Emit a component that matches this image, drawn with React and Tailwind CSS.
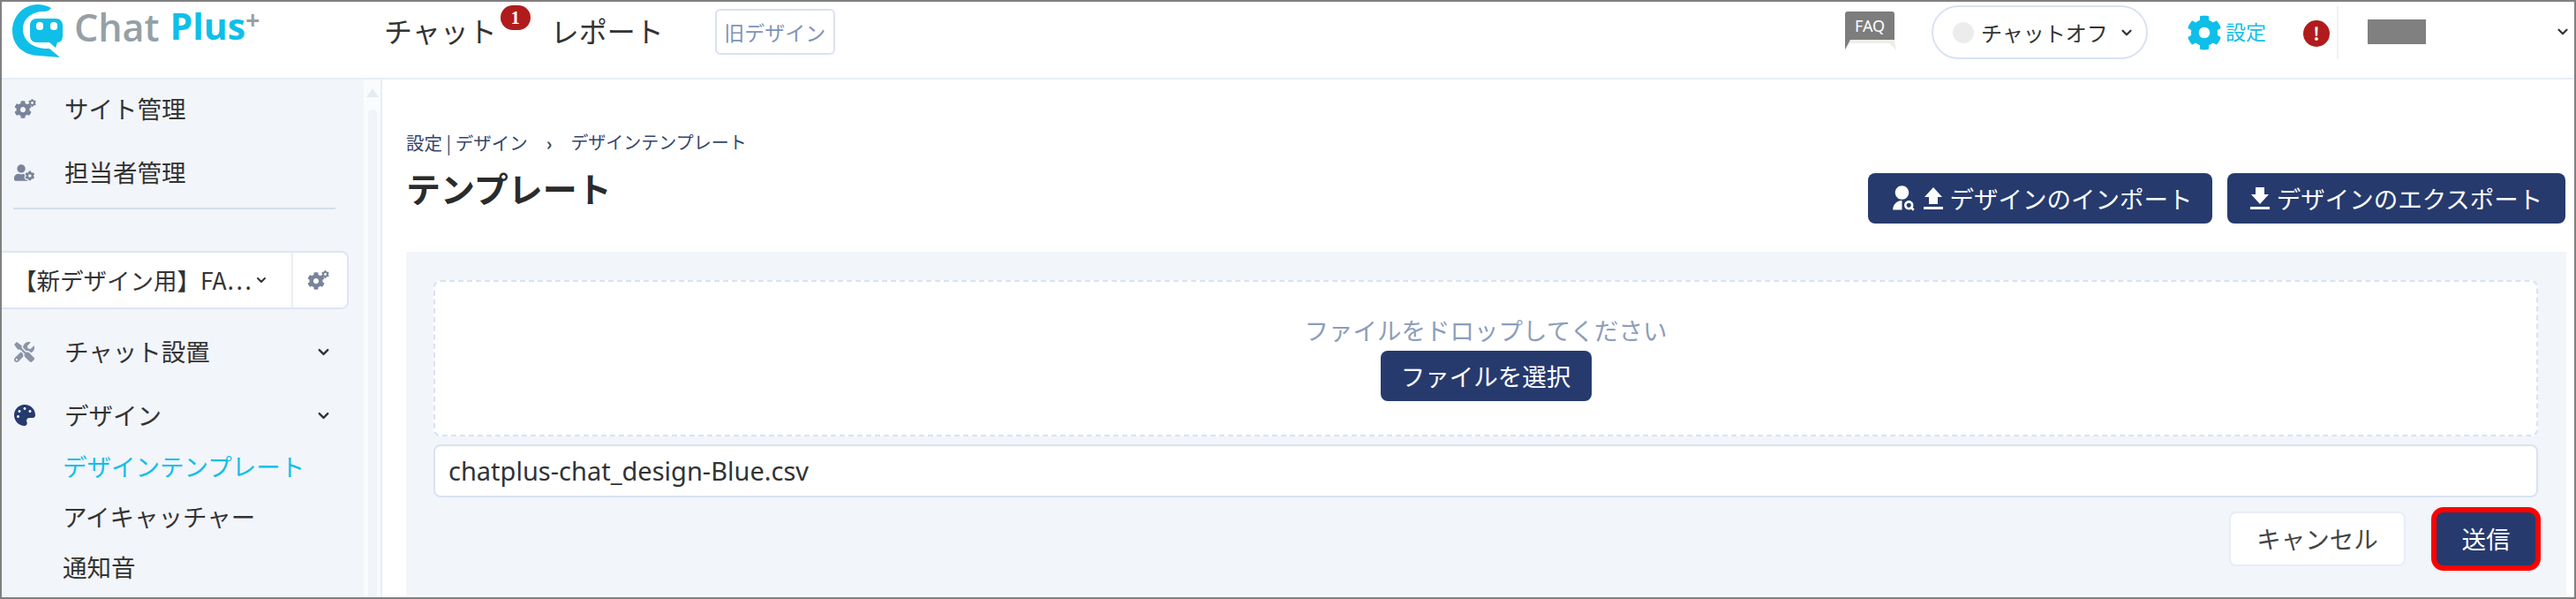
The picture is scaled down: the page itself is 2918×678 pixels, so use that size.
import { FaCog, FaUserCog, FaTools, FaPalette } from 'react-icons/fa';
import { RiUserSearchFill } from 'react-icons/ri';
import { ChevronDown } from 'lucide-react';

const FONT = '"Noto Sans CJK JP", "Noto Sans", sans-serif';

function Logo() {
  return (
    <svg width="58" height="60" viewBox="0 0 58 60" className="shrink-0">
      <path fill="#0fbfe9" d="M44 4C38 1 33 0 29 0 12 0 0 14 0 30c0 17 14 28 30 28l24 2-12-10C28 51 12 44 12 28 12 16 22 8 36 8c4 0 7-2 8-4z" />
      <path fill="#0fbfe9" d="M28 16h21c5 0 8 3 8 8v11c0 5-2 8-6 8l-2 6-7-6H28c-5 0-8-3-8-8V24c0-5 3-8 8-8z" />
      <rect x="27" y="20" width="8" height="9" rx="3.5" fill="#fff" />
      <rect x="43" y="20" width="8" height="9" rx="3.5" fill="#fff" />
    </svg>
  );
}

function FaqIcon() {
  return (
    <div className="relative w-[58px] h-[44px] shrink-0">
      <div className="w-[56px] h-[32px] bg-[#7d7d7d] rounded-t-[3px] flex items-center justify-center text-white text-[18px] font-['Noto_Sans',sans-serif]">FAQ</div>
      <svg width="58" height="12" viewBox="0 0 58 12" className="block">
        <path d="M0 0h56v0L58 12 50 4H6L0 11z" fill="#eeeee8" />
        <path d="M0 0h6L0 11z" fill="#7d7d7d" />
      </svg>
    </div>
  );
}

function GearsIcon({ className }) {
  return (
    <span className={`relative inline-block w-[25px] h-[22px] ${className}`}>
      <FaCog size={20} className="absolute left-0 bottom-0" />
      <FaCog size={9} className="absolute right-0 top-0" />
    </span>
  );
}

function UploadIcon() {
  return (
    <svg width="22" height="26" viewBox="0 0 22 26" className="shrink-0">
      <path fill="#fff" d="M11 0l10 11h-5v8H6v-8H1z" />
      <rect x="0" y="22" width="22" height="3" fill="#fff" />
    </svg>
  );
}

function DownloadIcon() {
  return (
    <svg width="22" height="26" viewBox="0 0 22 26" className="shrink-0">
      <path fill="#fff" d="M6 0h10v8h5L11 19 1 8h5z" />
      <rect x="0" y="22" width="22" height="3" fill="#fff" />
    </svg>
  );
}

function SideItem({ icon, label, hasChevron, textColor = 'text-[#333]' }) {
  return (
    <div className="flex items-center h-[72px]">
      <div className="w-[71px] pl-[14px] shrink-0 flex items-center">{icon}</div>
      <span className={`flex-1 text-[27.5px] leading-none ${textColor}`}>{label}</span>
      {hasChevron && <ChevronDown size={19} strokeWidth={3} className="mr-[36px] text-[#333]" />}
    </div>
  );
}

function SubItem({ label, active }) {
  return (
    <div className={`h-[57px] flex items-center pl-[69px] text-[27.5px] leading-none ${active ? 'text-[#12bfe9]' : 'text-[#333]'}`}>
      {label}
    </div>
  );
}

export default function App() {
  return (
    <div className="w-[2918px] h-[678px] border-2 border-[#808080] bg-white overflow-hidden flex flex-col" style={{ fontFamily: FONT }}>
      {/* Header */}
      <header className="h-[88px] shrink-0 border-b-2 border-[#e8edf6] flex items-start pt-[3px]">
        <div className="flex items-start w-[433px] shrink-0 pl-[12px]">
          <Logo />
          <span className="ml-[12px] mt-[4px] text-[43px] leading-none font-semibold text-[#95a0a6] font-['Open_Sans',sans-serif]">Chat</span>
          <span className="ml-[12px] mt-[4px] text-[41px] leading-none font-bold text-[#0fbfe9] font-['Open_Sans',sans-serif]">Plus</span>
          <span className="text-[28px] leading-none font-bold text-[#95a0a6] font-['Open_Sans',sans-serif] mt-[3px]">+</span>
        </div>
        <nav className="flex items-start h-[64px]">
          <span className="text-[32px] leading-none text-[#333] mt-[13px]">チャット</span>
          <span className="relative ml-[4px] mt-[1px] w-[34px] h-[28px] rounded-full bg-[#b01c1c] text-white text-[20px] leading-[28px] text-center font-['Liberation_Serif',serif] font-bold">1</span>
          <span className="ml-[23px] text-[32px] leading-none text-[#333] mt-[13px]">レポート</span>
          <span className="ml-[58px] mt-[5px] w-[136px] h-[52px] rounded-[6px] border-2 border-[#d9e2f2] text-[#7f93b8] text-[23px] flex items-center justify-center">旧デザイン</span>
        </nav>
        <div className="ml-auto flex items-start h-[64px]">
          <div className="mt-[8px]"><FaqIcon /></div>
          <div className="ml-[40px] mt-[1px] w-[245px] h-[61px] rounded-full border-2 border-[#d9e2f2] flex items-center pl-[22px]">
            <span className="w-[24px] h-[24px] rounded-full bg-[#ececec]" />
            <span className="ml-[8px] text-[24px] leading-none text-[#333]">チャットオフ</span>
            <ChevronDown size={18} strokeWidth={3} className="ml-[12px] text-[#333]" />
          </div>
          <FaCog size={40} className="ml-[44px] mt-[12px] text-[#0fbfe9]" />
          <span className="ml-[4px] mt-[19px] text-[23px] leading-none text-[#12bfe9]">設定</span>
          <span className="ml-[42px] mt-[18px] w-[30px] h-[30px] rounded-full bg-[#b01c1c] text-white text-[20px] leading-[30px] text-center font-bold">!</span>
          <span className="ml-[8px] mt-[2px] w-[2px] h-[60px] bg-[#eef1f6]" />
          <span className="ml-[33px] mt-[17px] w-[66px] h-[28px] bg-[#808080]" />
          <ChevronDown size={18} strokeWidth={3} className="ml-[146px] mr-[4px] mt-[22px] text-[#333]" />
        </div>
      </header>

      <div className="flex flex-1 min-h-0">
        {/* Sidebar */}
        <aside className="w-[410px] shrink-0 bg-[#f2f5fa] flex flex-col">
          <div className="-mt-[3px]">
            <SideItem icon={<GearsIcon className="text-[#79839a]" />} label="サイト管理" />
            <SideItem icon={<FaUserCog size={23} className="text-[#79839a]" />} label="担当者管理" />
          </div>
          <div className="ml-[13px] mr-[32px] h-[2px] bg-[#d6deec] mt-[4px]" />
          <div className="mt-[47px] mr-[17px] h-[66px] bg-white rounded-r-[8px] border-2 border-l-0 border-[#dfe6f3] flex items-center">
            <span className="w-[330px] h-full shrink-0 flex items-center pl-[13px] text-[26.5px] leading-none text-[#333] whitespace-nowrap border-r-2 border-[#e8edf6]">
              【新デザイン用】FA⋯
              <ChevronDown size={16} strokeWidth={3} className="ml-[3px]" />
            </span>
            <GearsIcon className="ml-[16px] text-[#79839a]" />
          </div>
          <div className="mt-[12px]">
            <SideItem icon={<FaTools size={23} className="text-[#8b93a6]" />} label="チャット設置" hasChevron />
            <SideItem icon={<FaPalette size={24} className="text-[#263a6e]" />} label="デザイン" hasChevron />
          </div>
          <div className="-mt-[7px]">
            <SubItem label="デザインテンプレート" active />
            <SubItem label="アイキャッチャー" />
            <SubItem label="通知音" />
          </div>
        </aside>

        {/* Scrollbar */}
        <div className="w-[21px] shrink-0 bg-[#fafbfd] border-r-2 border-[#e8edf6] flex flex-col items-center pt-[10px]">
          <div className="w-0 h-0 border-l-[7px] border-r-[7px] border-b-[10px] border-l-transparent border-r-transparent border-b-[#e6ebf3]" />
          <div className="mt-[14px] w-[10px] flex-1 bg-[#f0f3f8] rounded-t-[5px]" />
        </div>

        {/* Main */}
        <main className="flex-1 min-w-0 pl-[27px] pr-[9px] flex flex-col">
          <div className="h-[195px] shrink-0">
            <div className="pt-[59px] flex items-center text-[20.5px] leading-[24px] text-[#35466b] whitespace-nowrap">
              <span>設定 | デザイン</span>
              <span className="mx-[21px] font-bold">›</span>
              <span className="text-[20px]">デザインテンプレート</span>
            </div>
            <div className="flex items-start justify-between">
              <h1 className="mt-[13px] text-[39px] leading-[52px] font-bold text-[#2b2b2b]">テンプレート</h1>
              <div className="flex gap-[17px] mt-[23px] mr-[1px]">
                <button className="w-[390px] h-[57px] rounded-[8px] bg-[#263a6e] text-white text-[27.5px] flex items-center justify-center whitespace-nowrap">
                  <RiUserSearchFill size={31} className="mr-[9px]" />
                  <UploadIcon />
                  <span className="ml-[8px]">デザインのインポート</span>
                </button>
                <button className="w-[383px] h-[57px] rounded-[8px] bg-[#263a6e] text-white text-[27.5px] flex items-center justify-center whitespace-nowrap">
                  <DownloadIcon />
                  <span className="ml-[8px]">デザインのエクスポート</span>
                </button>
              </div>
            </div>
          </div>

          <section className="h-[389px] shrink-0 bg-[#f2f5fa] pt-[32px] pl-[31px] pr-[32px]">
            <div className="h-[177px] bg-white rounded-[8px] border-2 border-dashed border-[#d9e2f2] flex flex-col items-center pt-[36px]">
              <span className="text-[27.5px] leading-[36px] text-[#8d9dba]">ファイルをドロップしてください</span>
              <button className="w-[239px] h-[57px] rounded-[8px] bg-[#263a6e] text-white text-[27.5px] mt-[6px]">ファイルを選択</button>
            </div>
            <div className="mt-[9px] h-[60px] bg-white rounded-[8px] border-2 border-[#d9e2f2] flex items-center pl-[15px] text-[29px] text-[#333] font-['Noto_Sans',sans-serif]">
              chatplus-chat_design-Blue.csv
            </div>
            <div className="mt-[11px] flex justify-end items-center gap-[29px] -mr-[3px]">
              <button className="w-[200px] h-[62px] rounded-[8px] bg-white border-2 border-[#e8edf6] text-[27.5px] text-[#444]">キャンセル</button>
              <button className="w-[124px] h-[72px] rounded-[14px] border-[6px] border-[#ff0000] bg-[#263a6e] text-white text-[27.5px]">送信</button>
            </div>
          </section>
        </main>
      </div>
    </div>
  );
}
